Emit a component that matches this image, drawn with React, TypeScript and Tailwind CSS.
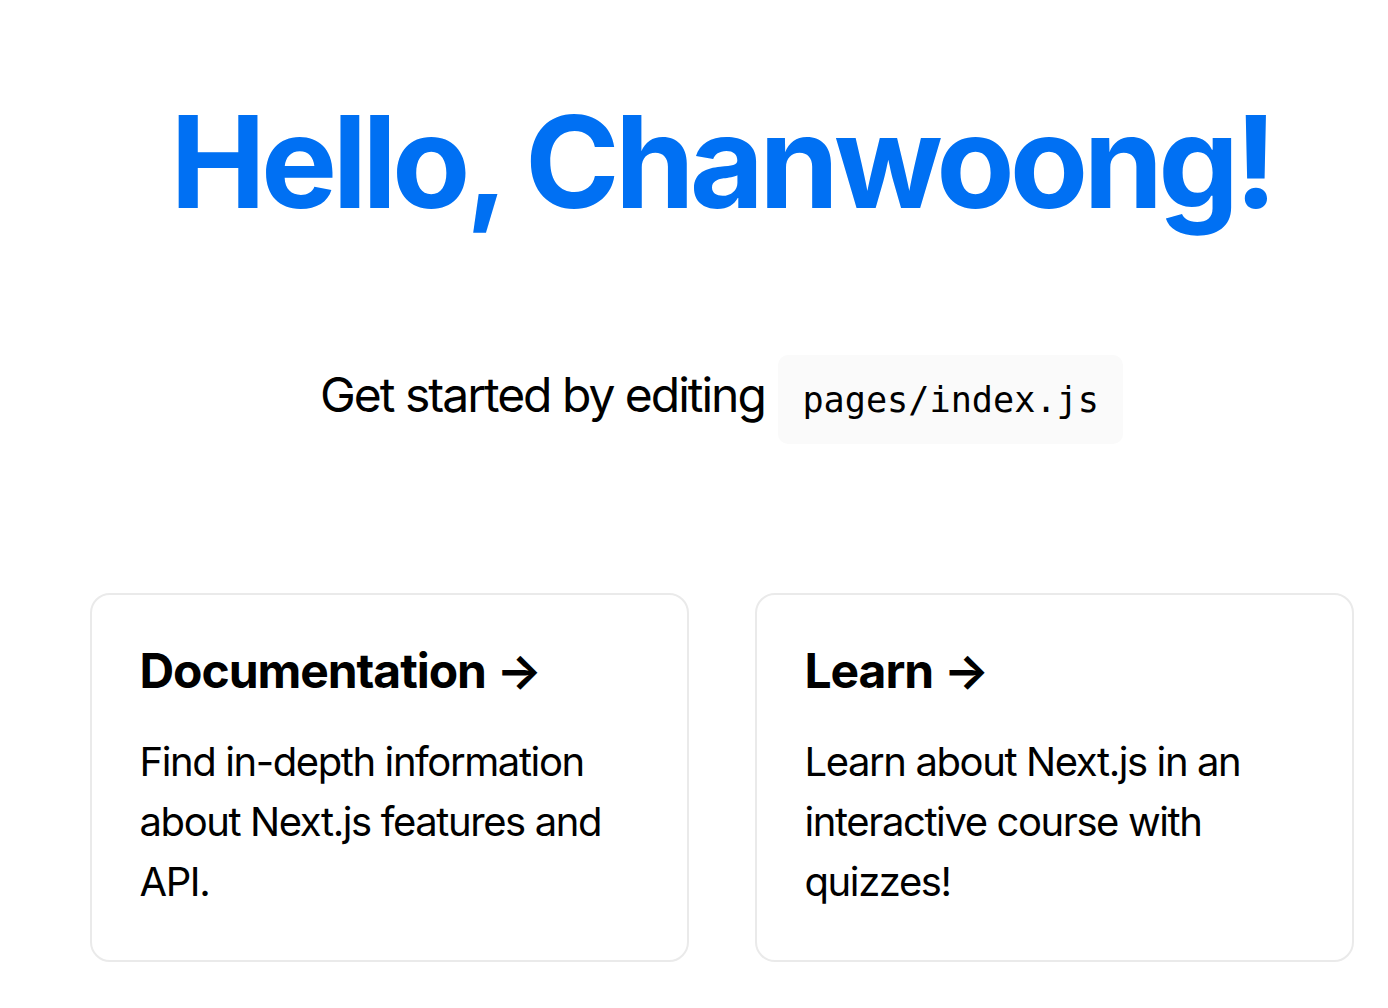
import React from "react";

function Card({ title, body }: { title: string; body: string }) {
  return (
    <a className="block w-[599px] shrink-0 rounded-[20px] border-2 border-[#eaeaea] p-[48px] text-black">
      <h2 className="m-0 mb-[34px] text-[48px] font-bold leading-[55px] tracking-[-0.022em]">{title} &rarr;</h2>
      <p className="m-0 text-[40px] leading-[60px] tracking-[-0.035em]">{body}</p>
    </a>
  );
}

export default function App() {
  return (
    <div
      className="min-h-[1008px] w-full overflow-hidden bg-white text-black"
      style={{ fontFamily: "Inter, 'Noto Sans', sans-serif" }}
    >
      <main className="flex flex-col items-center pl-[55px] pt-[88px]">
        <h1 className="m-0 text-center text-[128px] font-bold leading-[1.15] tracking-[-0.038em] text-[#0070f3]">
          Hello, Chanwoong!
        </h1>
        <p className="m-0 mt-[124px] text-center text-[48px] leading-[72px]">
          <span className="tracking-[-0.042em]">Get started by editing</span>{" "}
          <code
            className="rounded-[10px] bg-[#fafafa] p-[24px] text-[35.2px] tracking-normal"
            style={{ fontFamily: "'DejaVu Sans Mono', monospace" }}
          >
            pages/index.js
          </code>
        </p>
        <div className="mt-[157px] flex justify-center gap-[66px]">
          <Card title="Documentation" body="Find in-depth information about Next.js features and API." />
          <Card title="Learn" body="Learn about Next.js in an interactive course with quizzes!" />
        </div>
      </main>
    </div>
  );
}
